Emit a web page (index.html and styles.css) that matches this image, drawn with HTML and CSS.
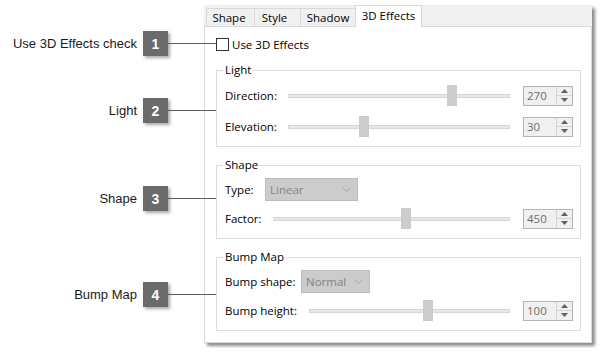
FILE: index.html
```html
<!DOCTYPE html>
<html>
<head>
<meta charset="utf-8">
<link rel="stylesheet" href="styles.css">
</head>
<body>
<div class="page">
  <div class="callouts">
    <div class="callout c1"><span class="callout-label">Use 3D Effects check</span><span class="badge">1</span></div>
    <div class="callout c2"><span class="callout-label">Light</span><span class="badge">2</span></div>
    <div class="callout c3"><span class="callout-label">Shape</span><span class="badge">3</span></div>
    <div class="callout c4"><span class="callout-label">Bump Map</span><span class="badge">4</span></div>
  </div>
  <div class="dialog">
    <div class="tabs">
      <div class="tab t-shape">Shape</div>
      <div class="tab t-style">Style</div>
      <div class="tab t-shadow">Shadow</div>
      <div class="tab t-3d active">3D Effects</div>
    </div>
    <div class="tab-page">
      <div class="check-row"><span class="checkbox"></span><span>Use 3D Effects</span></div>

      <fieldset class="group group-light">
        <legend>Light</legend>
        <div class="row row-gap-lg">
          <span class="label w-light">Direction:</span>
          <div class="slider"><div class="track"></div><div class="thumb" style="--v:0.75"></div></div>
          <div class="spin"><span class="spin-value">270</span><span class="spin-buttons"><span class="spin-btn"><svg width="7" height="4" viewBox="0 0 7 4"><path d="M0 4L3.5 0L7 4Z" fill="#606060"/></svg></span><span class="spin-btn"><svg width="7" height="4" viewBox="0 0 7 4"><path d="M0 0L3.5 4L7 0Z" fill="#606060"/></svg></span></span></div>
        </div>
        <div class="row">
          <span class="label w-light">Elevation:</span>
          <div class="slider"><div class="track"></div><div class="thumb" style="--v:0.333"></div></div>
          <div class="spin"><span class="spin-value">30</span><span class="spin-buttons"><span class="spin-btn"><svg width="7" height="4" viewBox="0 0 7 4"><path d="M0 4L3.5 0L7 4Z" fill="#606060"/></svg></span><span class="spin-btn"><svg width="7" height="4" viewBox="0 0 7 4"><path d="M0 0L3.5 4L7 0Z" fill="#606060"/></svg></span></span></div>
        </div>
      </fieldset>

      <fieldset class="group">
        <legend>Shape</legend>
        <div class="row row-combo">
          <span class="label w-type">Type:</span>
          <div class="combo w-linear"><span>Linear</span><svg class="chev" width="9" height="5" viewBox="0 0 9 5"><path d="M0.5 0.5L4.5 4.5L8.5 0.5" fill="none" stroke="#a3a3a3" stroke-width="1"/></svg></div>
        </div>
        <div class="row">
          <span class="label w-factor">Factor:</span>
          <div class="slider"><div class="track"></div><div class="thumb" style="--v:0.5625"></div></div>
          <div class="spin"><span class="spin-value">450</span><span class="spin-buttons"><span class="spin-btn"><svg width="7" height="4" viewBox="0 0 7 4"><path d="M0 4L3.5 0L7 4Z" fill="#606060"/></svg></span><span class="spin-btn"><svg width="7" height="4" viewBox="0 0 7 4"><path d="M0 0L3.5 4L7 0Z" fill="#606060"/></svg></span></span></div>
        </div>
      </fieldset>

      <fieldset class="group">
        <legend>Bump Map</legend>
        <div class="row row-combo">
          <span class="label w-bshape">Bump shape:</span>
          <div class="combo w-normal"><span>Normal</span><svg class="chev" width="9" height="5" viewBox="0 0 9 5"><path d="M0.5 0.5L4.5 4.5L8.5 0.5" fill="none" stroke="#a3a3a3" stroke-width="1"/></svg></div>
        </div>
        <div class="row">
          <span class="label w-bheight">Bump height:</span>
          <div class="slider"><div class="track"></div><div class="thumb" style="--v:0.595"></div></div>
          <div class="spin"><span class="spin-value">100</span><span class="spin-buttons"><span class="spin-btn"><svg width="7" height="4" viewBox="0 0 7 4"><path d="M0 4L3.5 0L7 4Z" fill="#606060"/></svg></span><span class="spin-btn"><svg width="7" height="4" viewBox="0 0 7 4"><path d="M0 0L3.5 4L7 0Z" fill="#606060"/></svg></span></span></div>
        </div>
      </fieldset>
    </div>
  </div>
</div>
</body>
</html>
```
FILE: styles.css
```css
html, body {
  margin: 0;
  padding: 0;
  background: #ffffff;
}

.page {
  display: flex;
  padding-top: 5px;
  width: 602px;
  height: 348px;
  box-sizing: border-box;
}

/* ---------- callouts ---------- */
.callouts {
  width: 204px;
  flex: none;
  display: flex;
  flex-direction: column;
  position: relative;
  z-index: 2;
}

.callout {
  display: flex;
  align-items: center;
  justify-content: flex-end;
  height: 25px;
  padding-right: 36px;
  font-family: "Liberation Sans", Arial, sans-serif;
  font-size: 13px;
  color: #1a1a1a;
}

.c1 { margin-top: 26px; }
.c2 { margin-top: 42px; }
.c3 { margin-top: 63px; }
.c4 { margin-top: 71px; }

.callout-label {
  margin-right: 6px;
}

.badge {
  position: relative;
  width: 25px;
  height: 25px;
  background: #6b6b6b;
  color: #ffffff;
  font-weight: bold;
  font-size: 14px;
  display: flex;
  align-items: center;
  justify-content: center;
  box-shadow: 2px 2px 3px rgba(0, 0, 0, 0.35);
}

.badge::after {
  content: "";
  position: absolute;
  left: 100%;
  top: 12px;
  width: 48px;
  height: 1px;
  background: #5c5c5c;
}

/* ---------- dialog ---------- */
.dialog {
  width: 388px;
  height: 338px;
  flex: none;
  background: #f0f0f0;
  display: flex;
  flex-direction: column;
  box-shadow: 3px 3px 3px rgba(0, 0, 0, 0.45);
  font-family: "Open Sans", "Noto Sans", sans-serif;
  font-size: 11.5px;
  color: #000000;
}

.tabs {
  height: 21px;
  flex: none;
  display: flex;
  align-items: flex-end;
  padding-left: 2px;
}

.tab {
  height: 18px;
  box-sizing: border-box;
  border: 1px solid #d9d9d9;
  border-bottom: none;
  background: #f0f0f0;
  margin-right: -1px;
  display: flex;
  align-items: center;
  justify-content: center;
  line-height: 16px;
}

.t-shape { width: 49px; padding-right: 3px; }
.t-style { width: 47px; padding-right: 6px; }
.t-shadow { width: 56px; }
.t-3d { width: 67px; }

.tab.active {
  height: 22px;
  background: #ffffff;
  margin-bottom: -1px;
  position: relative;
  z-index: 1;
  padding-bottom: 2px;
}

.tab-page {
  flex: 1;
  background: #ffffff;
  border: 1px solid #d9d9d9;
  padding: 11px 10px 0 11px;
  display: flex;
  flex-direction: column;
}

.check-row {
  display: flex;
  align-items: center;
  height: 13px;
  gap: 3px;
}

.checkbox {
  width: 13px;
  height: 13px;
  box-sizing: border-box;
  border: 1px solid #333333;
  background: #ffffff;
}

/* ---------- groups ---------- */
.group {
  margin: 10px 0 0;
  padding: 5px 7px 9px 6px;
  border: 1px solid #dcdcdc;
  min-width: 0;
}

.group-light {
  margin-top: 11px;
  padding-top: 7px;
}

.group legend {
  padding: 0 2px;
  line-height: 16px;
}

.row {
  display: flex;
  align-items: center;
  height: 21px;
  padding-left: 2px;
  margin-top: 7px;
}

.row:first-of-type,
.row-combo {
  margin-top: 0;
}

.row-combo {
  height: 23px;
}

.row-gap-lg + .row {
  margin-top: 10px;
}

.label {
  flex: none;
  line-height: 16px;
}

.w-light { width: 63px; }
.w-type { width: 40px; }
.w-factor { width: 48px; }
.w-bshape { width: 76px; }
.w-bheight { width: 84px; }

/* ---------- slider ---------- */
.slider {
  flex: 1;
  height: 21px;
  position: relative;
  margin-right: 13px;
  display: flex;
  align-items: center;
}

.track {
  width: 100%;
  height: 4px;
  box-sizing: border-box;
  background: #e7e7e7;
  border: 1px solid #d6d6d6;
}

.thumb {
  position: absolute;
  top: 0;
  left: calc((100% - 10px) * var(--v));
  width: 10px;
  height: 21px;
  background: #cccccc;
}

/* ---------- spin ---------- */
.spin {
  width: 50px;
  height: 20px;
  box-sizing: border-box;
  border: 1px solid #b4b4b4;
  background: #f0f0f0;
  display: flex;
  flex: none;
}

.spin-value {
  flex: 1;
  padding-left: 3px;
  color: #6d6d6d;
  line-height: 18px;
}

.spin-buttons {
  width: 15px;
  display: flex;
  flex-direction: column;
  border-left: 1px solid #d4d4d4;
}

.spin-btn {
  flex: 1;
  display: flex;
  align-items: center;
  justify-content: center;
}

.spin-btn + .spin-btn {
  border-top: 1px solid #d4d4d4;
}

/* ---------- combo ---------- */
.combo {
  height: 23px;
  box-sizing: border-box;
  border: 1px solid #bcbcbc;
  background: #cccccc;
  color: #838383;
  display: flex;
  align-items: center;
  justify-content: space-between;
  padding: 0 6px 0 4px;
}

.w-linear { width: 93px; }
.w-normal { width: 69px; }

.chev {
  display: block;
}
```
